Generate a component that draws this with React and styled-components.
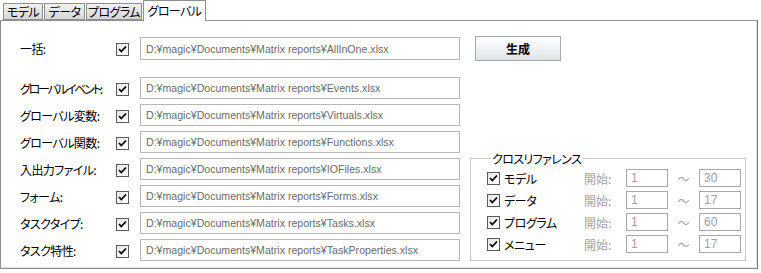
import React from "react";
import styled, { createGlobalStyle } from "styled-components";

const GlobalStyle = createGlobalStyle`
  html, body {
    margin: 0;
    padding: 0;
    background: #ffffff;
  }
  body {
    font-family: "Noto Sans CJK JP", "Liberation Sans", sans-serif;
    font-size: 12px;
    color: #000;
  }
`;

const Window = styled.div`
  width: 761px;
  height: 273px;
  box-sizing: border-box;
  padding: 0 3px 0 0;
  background: #fff;
`;

const TabBar = styled.div`
  display: flex;
  align-items: flex-end;
  height: 20px;
  padding-left: 3px;
  position: relative;
  z-index: 1;
`;

const Tab = styled.div`
  box-sizing: border-box;
  width: ${(p) => p.$w}px;
  height: ${(p) => (p.$active ? "21px" : "17px")};
  margin-bottom: ${(p) => (p.$active ? "-1px" : "0")};
  display: flex;
  align-items: center;
  justify-content: center;
  border: 1px solid #8e8f8f;
  border-bottom: ${(p) => (p.$active ? "none" : "1px solid #8e8f8f")};
  margin-right: ${(p) => (p.$active ? "0" : "1px")};
  background: ${(p) =>
    p.$active ? "#ffffff" : "linear-gradient(#f2f2f2, #d6d6d6)"};
  font-size: 12px;
  font-feature-settings: "palt";
  letter-spacing: -0.6px;
  line-height: 1;
  white-space: nowrap;
`;

const Panel = styled.div`
  box-sizing: border-box;
  height: 249px;
  border: 1px solid #8e8f8f;
  border-right-color: #777;
  box-shadow: inset -1px -1px 0 #e4e4e4;
  padding: 16px 0 0 19px;
`;

const Grid = styled.div`
  display: grid;
  grid-template-columns: 96px 24px 320px 10px 278px;
  grid-template-rows: 23px 7px repeat(7, 22px);
  row-gap: 5px;
`;

const Label = styled.div`
  grid-column: 1;
  grid-row: ${(p) => p.$row};
  display: flex;
  align-items: center;
  font-feature-settings: "palt";
  letter-spacing: ${(p) => (p.$tight ? "-2.2px" : "-0.6px")};
  white-space: nowrap;
`;

const CheckCell = styled.div`
  grid-column: 2;
  grid-row: ${(p) => p.$row};
  display: flex;
  align-items: center;
  padding-top: 2px;
`;

const Box = styled.span`
  box-sizing: border-box;
  width: 13px;
  height: 13px;
  border: 1px solid #5a5a5a;
  background: linear-gradient(135deg, #e6e6e6, #ffffff);
  display: inline-flex;
  align-items: center;
  justify-content: center;
  flex: none;
`;

const Check = () => (
  <Box>
    <svg width="9" height="9" viewBox="0 0 9 9">
      <path d="M1 4 L3.3 6.5 L8 1.5" fill="none" stroke="#000" strokeWidth="1.8" />
    </svg>
  </Box>
);

const PathInput = styled.div`
  grid-column: 3;
  grid-row: ${(p) => p.$row};
  box-sizing: border-box;
  border: 1px solid #b7b7b7;
  padding: 0 5px;
  display: flex;
  align-items: center;
  font-family: "Liberation Sans", sans-serif;
  font-size: 10.6px;
  color: #6b6b6b;
  white-space: nowrap;
  overflow: hidden;
`;

const ButtonCell = styled.div`
  grid-column: 5;
  grid-row: 1;
  padding-left: 5px;
`;

const Button = styled.div`
  box-sizing: border-box;
  width: 86px;
  height: 25px;
  margin-top: -1px;
  border: 1px solid #a4a9ae;
  background: linear-gradient(#ffffff 0%, #f1f3f5 45%, #dfe4ea 100%);
  display: flex;
  align-items: center;
  justify-content: center;
  font-weight: bold;
  font-size: 12px;
`;

const Group = styled.fieldset`
  grid-column: 5;
  grid-row: 6 / 10;
  margin: -6px 2px 0 0;
  padding: 4px 0 0 16px;
  border: 1px solid #c9c9c9;
  box-shadow: inset 1px 1px 0 #fff;
  display: flex;
  flex-direction: column;
  gap: 4px;
`;

const Legend = styled.legend`
  padding: 0 1px;
  margin-left: 4px;
  font-size: 12px;
  font-feature-settings: "palt";
  letter-spacing: -0.6px;
  line-height: 13px;
`;

const RefRow = styled.div`
  display: flex;
  align-items: center;
  height: 18px;
`;

const RefName = styled.span`
  width: 80px;
  padding-left: 4px;
  font-feature-settings: "palt";
  letter-spacing: -0.4px;
`;

const Muted = styled.span`
  color: #a3a3a3;
  width: ${(p) => p.$w}px;
  font-feature-settings: "palt";
  text-align: ${(p) => p.$align || "left"};
`;

const NumBox = styled.div`
  box-sizing: border-box;
  width: 42px;
  height: 18px;
  border: 1px solid #a9a9a9;
  padding-left: 4px;
  display: flex;
  align-items: center;
  color: #a0a0a0;
  font-family: "Liberation Sans", sans-serif;
  font-size: 12px;
`;

const files = [
  ["グローバルイベント:", "Events.xlsx", true],
  ["グローバル変数:", "Virtuals.xlsx"],
  ["グローバル関数:", "Functions.xlsx"],
  ["入出力ファイル:", "IOFiles.xlsx"],
  ["フォーム:", "Forms.xlsx"],
  ["タスクタイプ:", "Tasks.xlsx"],
  ["タスク特性:", "TaskProperties.xlsx"],
];

const refs = [
  ["モデル", "1", "30"],
  ["データ", "1", "17"],
  ["プログラム", "1", "60"],
  ["メニュー", "1", "17"],
];

const base = "D:¥magic¥Documents¥Matrix reports¥";

export default function App() {
  return (
    <Window>
      <GlobalStyle />
      <TabBar>
        <Tab $w={40}>モデル</Tab>
        <Tab $w={41}>データ</Tab>
        <Tab $w={56}>プログラム</Tab>
        <Tab $w={63} $active>
          グローバル
        </Tab>
      </TabBar>
      <Panel>
        <Grid>
          <Label $row={1}>一括:</Label>
          <CheckCell $row={1}>
            <Check />
          </CheckCell>
          <PathInput $row={1}>{base}AllInOne.xlsx</PathInput>
          <ButtonCell>
            <Button>生成</Button>
          </ButtonCell>

          {files.map(([label, file, tight], i) => (
            <React.Fragment key={file}>
              <Label $row={i + 3} $tight={tight}>
                {label}
              </Label>
              <CheckCell $row={i + 3}>
                <Check />
              </CheckCell>
              <PathInput $row={i + 3}>
                {base}
                {file}
              </PathInput>
            </React.Fragment>
          ))}

          <Group>
            <Legend>クロスリファレンス</Legend>
            {refs.map(([name, from, to]) => (
              <RefRow key={name}>
                <Check />
                <RefName>{name}</RefName>
                <Muted $w={42}>開始:</Muted>
                <NumBox>{from}</NumBox>
                <Muted $w={31} $align="center">
                  ～
                </Muted>
                <NumBox>{to}</NumBox>
              </RefRow>
            ))}
          </Group>
        </Grid>
      </Panel>
    </Window>
  );
}
